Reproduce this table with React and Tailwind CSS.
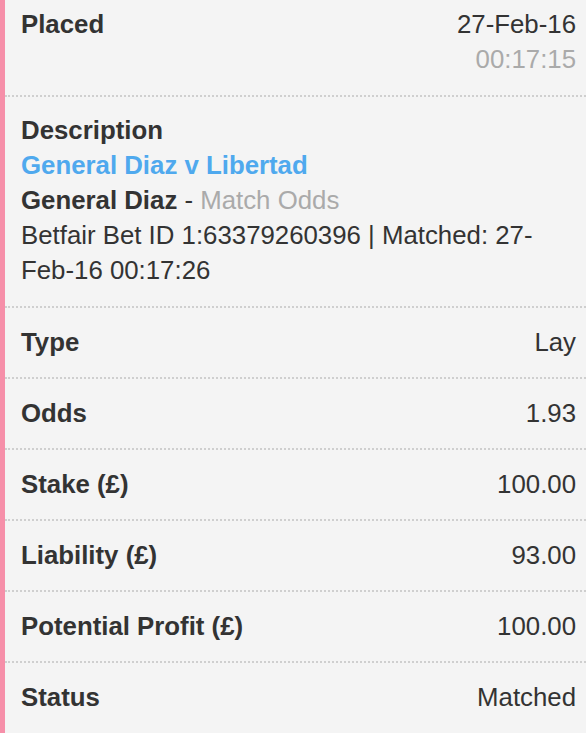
const rows = [
  { label: "Type", value: "Lay" },
  { label: "Odds", value: "1.93" },
  { label: "Stake (£)", value: "100.00" },
  { label: "Liability (£)", value: "93.00" },
  { label: "Potential Profit (£)", value: "100.00" },
  { label: "Status", value: "Matched" },
];

export default function App() {
  return (
    <main
      className="min-h-[733px] bg-[#f4f4f4] border-l-[5px] border-[#f68fa9] text-[25.8px] leading-[35px] text-[#333]"
      style={{ fontFamily: '"Liberation Sans", Arial, sans-serif' }}
    >
      <div className="flex justify-between border-b-2 border-dotted border-[#cfcfcf] pl-[16px] pr-[10px] pt-[7px] pb-[18px]">
        <span className="font-bold">Placed</span>
        <div className="text-right">
          <div>27-Feb-16</div>
          <div className="text-[#aaa]">00:17:15</div>
        </div>
      </div>

      <div className="border-b-2 border-dotted border-[#cfcfcf] pl-[16px] pr-[10px] pt-[16px] pb-[18px]">
        <div className="font-bold">Description</div>
        <div className="font-bold text-[#4fa9ee]">General Diaz v Libertad</div>
        <div>
          <span className="font-bold">General Diaz</span> - <span className="text-[#aaa]">Match Odds</span>
        </div>
        <div>Betfair Bet ID 1:63379260396 | Matched: 27-Feb-16 00:17:26</div>
      </div>

      {rows.map((row, i) => (
        <div
          key={row.label}
          className={
            i < rows.length - 1
              ? "flex justify-between border-b-2 border-dotted border-[#cfcfcf] pl-[16px] pr-[10px] py-[17px]"
              : "flex justify-between pl-[16px] pr-[10px] py-[17px]"
          }
        >
          <span className="font-bold">{row.label}</span>
          <span>{row.value}</span>
        </div>
      ))}
    </main>
  );
}
